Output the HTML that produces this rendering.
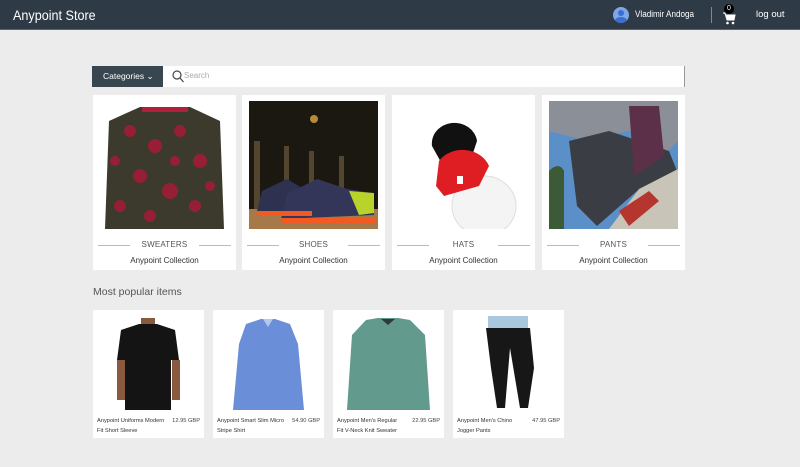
<!DOCTYPE html>
<html><head><style>
*{margin:0;padding:0;box-sizing:border-box}
body{width:800px;height:467px;background:#ececec;font-family:"Liberation Sans",sans-serif;position:relative;overflow:hidden}
.hdr{position:absolute;left:0;top:0;width:800px;height:30px;background:#2e3a45;border-bottom:1px solid #5a6570}
.abs{position:absolute}
.card{position:absolute;background:#fff;top:95px;width:143px;height:175px}
.card svg{position:absolute;left:7px;top:6px}
.lab{position:absolute;top:145px;width:100%;text-align:center;font-size:8px;color:#555;letter-spacing:.2px}
.line{position:absolute;top:150px;height:1px;background:#bbb;width:32px}
.col{position:absolute;top:161px;width:100%;text-align:center;font-size:8px;color:#333}
.pc{position:absolute;background:#fff;top:310px;width:111px;height:128px}
.pc svg{position:absolute;left:0;top:6px}
.pn{position:absolute;left:4px;top:106px;font-size:5.7px;color:#333;line-height:10px;width:68px}
.pp{position:absolute;right:4px;top:106px;font-size:5.7px;color:#444;line-height:10px}
</style></head><body>
<div class="hdr">
<div class="abs" style="left:13px;top:7px;color:#fff;font-size:14px;transform:scaleX(.9);transform-origin:left">Anypoint Store</div>
<div class="abs" style="left:613px;top:7px;width:16px;height:16px;border-radius:50%;background:#7fa6e6;overflow:hidden"><div class="abs" style="left:5px;top:3px;width:6px;height:6px;border-radius:50%;background:#3a6ed0"></div><div class="abs" style="left:2px;top:10px;width:12px;height:8px;border-radius:50%;background:#3a6ed0"></div></div>
<div class="abs" style="left:635px;top:9px;color:#fff;font-size:9px;transform:scaleX(.9);transform-origin:left">Vladimir Andoga</div>
<div class="abs" style="left:711px;top:7px;width:1px;height:16px;background:#888"></div>
<div class="abs" style="left:724px;top:4px;width:10px;height:10px;border-radius:50%;background:#000;color:#fff;font-size:7px;text-align:center;line-height:10px">0</div>
<svg class="abs" style="left:722px;top:12px" width="14" height="13" viewBox="0 0 14 13"><path d="M1 1h2l2 7h7l1-5H4" fill="#fff" stroke="#fff"/><circle cx="5.5" cy="11" r="1.3" fill="#fff"/><circle cx="11" cy="11" r="1.3" fill="#fff"/></svg>
<div class="abs" style="left:756px;top:9px;color:#fff;font-size:9.5px">log out</div>
</div>
<div class="abs" style="left:92px;top:66px;width:593px;height:21px;background:#fff;border-right:1px solid #999"></div>
<div class="abs" style="left:92px;top:66px;width:71px;height:21px;background:#37464f;color:#fff;font-size:8.5px;line-height:21px;padding-left:11px">Categories &#8964;</div>
<svg class="abs" style="left:172px;top:70px" width="12" height="13"><circle cx="5" cy="5" r="4" fill="none" stroke="#444" stroke-width="1.2"/><path d="M8 8l3.5 4" stroke="#444" stroke-width="1.2"/></svg>
<div class="abs" style="left:184px;top:71px;font-size:8px;color:#aaa">Search</div>

<div class="card" style="left:93px"><svg width="129" height="128"><rect width="129" height="128" fill="#fff"/><path d="M40 6h50l30 14 4 108H105V40 128H25V40 128H5l4-108z" fill="#3b3a2c"/><path d="M42 6h46v5H42z" fill="#b0203c"/><g fill="#a01d38" opacity=".9"><circle cx="30" cy="30" r="6"/><circle cx="55" cy="45" r="7"/><circle cx="80" cy="30" r="6"/><circle cx="100" cy="60" r="7"/><circle cx="40" cy="75" r="7"/><circle cx="70" cy="90" r="8"/><circle cx="95" cy="105" r="6"/><circle cx="20" cy="105" r="6"/><circle cx="50" cy="115" r="6"/><circle cx="110" cy="85" r="5"/><circle cx="15" cy="60" r="5"/><circle cx="75" cy="60" r="5"/></g></svg><div class="line" style="left:5px"></div><div class="lab">SWEATERS</div><div class="line" style="right:5px"></div><div class="col">Anypoint Collection</div></div>

<div class="card" style="left:242px"><svg width="129" height="128"><rect width="129" height="128" fill="#1b1812"/><g fill="#6b5a3a" opacity=".7"><rect x="5" y="40" width="6" height="70"/><rect x="35" y="45" width="5" height="60"/><rect x="60" y="50" width="5" height="55"/><rect x="90" y="55" width="5" height="50"/></g><circle cx="65" cy="18" r="4" fill="#b88a3a"/><rect y="108" width="129" height="20" fill="#a57a48"/><path d="M8 110l5-20 25-12 20 12 5 20z" fill="#2f3150"/><path d="M32 118l6-25 30-15 30 10 25 4 2 22z" fill="#343659"/><path d="M100 90l25 2 0 20-15 2z" fill="#b8d42a"/><path d="M8 110h55v5H8zM32 117h95v6H32z" fill="#f15a22"/></svg><div class="line" style="left:5px"></div><div class="lab">SHOES</div><div class="line" style="right:5px"></div><div class="col">Anypoint Collection</div></div>

<div class="card" style="left:392px"><svg width="129" height="128"><rect width="129" height="128" fill="#fff"/><ellipse cx="85" cy="105" rx="32" ry="30" fill="#f4f4f4" stroke="#ddd"/><path d="M33 45a22 20 0 0 1 45-5l-5 15-30 8z" fill="#111"/><path d="M40 60a28 24 0 0 1 50 5l-10 20-35 10-8-10z" fill="#de1e23"/><rect x="58" y="75" width="6" height="8" fill="#fff"/></svg><div class="line" style="left:5px"></div><div class="lab">HATS</div><div class="line" style="right:5px"></div><div class="col">Anypoint Collection</div></div>

<div class="card" style="left:542px"><svg width="129" height="128"><rect width="129" height="128" fill="#5b8fc7"/><path d="M0 70q10-10 15 0v58H0z" fill="#3b5a35"/><path d="M0 0h129v40l-10 10-40-20-40 10-40-10z" fill="#8a8f98"/><path d="M20 40l40-10 60 20 8 20-40 20-40 35-20-20z" fill="#3a3d44"/><path d="M60 128l30-40 39-20v60z" fill="#c8c4b8"/><path d="M80 5h30l5 50-30 20z" fill="#5c3048"/><path d="M70 110l30-20 10 10-30 25z" fill="#b5352f"/></svg><div class="line" style="left:5px"></div><div class="lab">PANTS</div><div class="line" style="right:5px"></div><div class="col">Anypoint Collection</div></div>

<div class="abs" style="left:93px;top:286px;font-size:10.5px;color:#555">Most popular items</div>

<div class="pc" style="left:93px"><svg width="111" height="94"><rect x="48" y="2" width="14" height="8" fill="#8a5a40"/><path d="M28 14l18-6h18l18 6 4 30H78v50H32V44h-8z" fill="#141414"/><rect x="24" y="44" width="8" height="40" fill="#8a5a40"/><rect x="79" y="44" width="8" height="40" fill="#8a5a40"/></svg><div class="pn">Anypoint Uniforms Modern Fit Short Sleeve</div><div class="pp">12.95 GBP</div></div>
<div class="pc" style="left:213px"><svg width="111" height="94"><path d="M33 8l15-5h14l15 5 8 20 6 66H20l6-66z" fill="#6a8fd8"/><path d="M50 3l5 8 5-8" fill="#fff" opacity=".5"/></svg><div class="pn">Anypoint Smart Slim Micro Stripe Shirt</div><div class="pp">54.90 GBP</div></div>
<div class="pc" style="left:333px"><svg width="111" height="94"><path d="M33 4l12-2h20l12 2 15 15 5 75H85V40 94H25V40 94H14l5-75z" fill="#639a8e"/><path d="M48 3l7 6 7-6" fill="#2d3a40"/></svg><div class="pn">Anypoint Men's Regular Fit V-Neck Knit Sweater</div><div class="pp">22.95 GBP</div></div>
<div class="pc" style="left:453px"><svg width="111" height="94"><rect x="35" y="0" width="40" height="12" fill="#a9c7dd"/><path d="M33 12h44l4 40-6 40h-8l-10-60-5 60h-8l-6-40z" fill="#171717"/></svg><div class="pn">Anypoint Men's Chino Jogger Pants</div><div class="pp">47.95 GBP</div></div>
</body></html>
